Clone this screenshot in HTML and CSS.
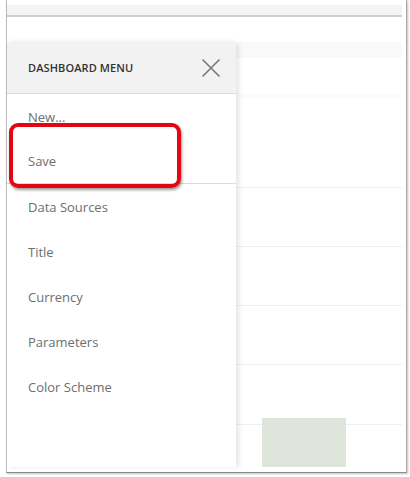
FILE: index.html
```html
<!DOCTYPE html>
<html>
<head>
<meta charset="utf-8">
<link rel="stylesheet" href="styles.css">
</head>
<body>
<div class="frame">
  <div class="topbar"></div>
  <div class="gap"></div>
  <div class="stage">
    <div class="panel">
      <div class="panel-head">
        <span class="panel-title">DASHBOARD MENU</span>
        <svg class="close" width="20" height="20" viewBox="0 0 20 20">
          <path d="M1.5 1.5 L18.5 18.5 M18.5 1.5 L1.5 18.5" stroke="#777" stroke-width="1.6" fill="none"/>
        </svg>
      </div>
      <ul class="menu">
        <li class="item">New...</li>
        <li class="item sep">Save</li>
        <li class="item">Data Sources</li>
        <li class="item">Title</li>
        <li class="item">Currency</li>
        <li class="item">Parameters</li>
        <li class="item">Color Scheme</li>
      </ul>
    </div>
    <div class="board">
      <div class="band"></div>
      <div class="row r1"></div>
      <div class="band2"></div>
      <div class="row r2"></div>
      <div class="row r3 line"></div>
      <div class="row r3 line"></div>
      <div class="row r3 line"></div>
      <div class="row r4 line"></div>
      <div class="row last line"><div class="bar"></div></div>
    </div>
    <div class="highlight"></div>
  </div>
</div>
</body>
</html>
```
FILE: styles.css
```css
html, body {
  margin: 0;
  padding: 0;
  background: #fff;
}
body {
  font-family: "Open Sans", "Noto Sans", sans-serif;
  width: 410px;
  height: 477px;
  overflow: hidden;
}
.frame {
  margin-left: 6px;
  width: 401px;
  height: 473px;
  box-sizing: border-box;
  border-left: 1px solid #bdbdbd;
  border-right: 1px solid #a8a8a8;
  border-bottom: 1px solid #8a8a8a;
  box-shadow: 1px 1px 2px rgba(0,0,0,0.25);
  padding: 5px 4px 5px 0;
  display: flex;
  flex-direction: column;
}
.topbar {
  height: 10px;
  background: #f4f4f4;
  border-bottom: 2px solid #cfcfcf;
  flex: none;
}
.gap {
  height: 25px;
  flex: none;
}
.stage {
  position: relative;
  flex: 1;
  display: flex;
  min-height: 0;
}
.panel {
  width: 229px;
  flex: none;
  background: #fff;
  position: relative;
  z-index: 2;
  box-shadow: 3px 0 5px rgba(0,0,0,0.10);
  border-top-right-radius: 6px;
  display: flex;
  flex-direction: column;
}
.panel-head {
  height: 51px;
  background: #f2f2f2;
  border-bottom: 1px solid #dcdcdc;
  border-top-right-radius: 6px;
  display: flex;
  align-items: center;
  justify-content: space-between;
  padding: 0 15px 0 21px;
  flex: none;
}
.panel-title {
  font-size: 11px;
  font-weight: 600;
  color: #333;
  letter-spacing: 0.1px;
}
.close {
  display: block;
  margin-top: 1px;
}
.menu {
  list-style: none;
  margin: 0;
  padding: 0;
}
.item {
  height: 45px;
  box-sizing: border-box;
  padding-left: 21px;
  display: flex;
  align-items: center;
  font-size: 13px;
  color: #6e6e6e;
}
.item.sep {
  border-bottom: 1px solid #dcdcdc;
}
.board {
  flex: 1;
  display: flex;
  flex-direction: column;
  overflow: hidden;
}
.band {
  height: 16px;
  background: #f9f9f9;
  flex: none;
}
.r1 { height: 35px; flex: none; }
.band2 { height: 4px; background: #fbfbfb; flex: none; }
.r2 { height: 90px; flex: none; }
.row.line { border-top: 1px solid #efefef; }
.r3 { height: 59px; flex: none; box-sizing: border-box; }
.r4 { height: 60px; flex: none; box-sizing: border-box; }
.last { flex: 1; }
.bar {
  margin-left: 26px;
  margin-top: -7px;
  width: 84px;
  height: 51px;
  background: #dfe5da;
}
.highlight {
  position: absolute;
  left: 2px;
  top: 81px;
  width: 172px;
  height: 65px;
  box-sizing: border-box;
  border: 4px solid #e30613;
  border-radius: 9px;
  box-shadow: 1px 2px 3px rgba(0,0,0,0.4);
  z-index: 3;
}
```
